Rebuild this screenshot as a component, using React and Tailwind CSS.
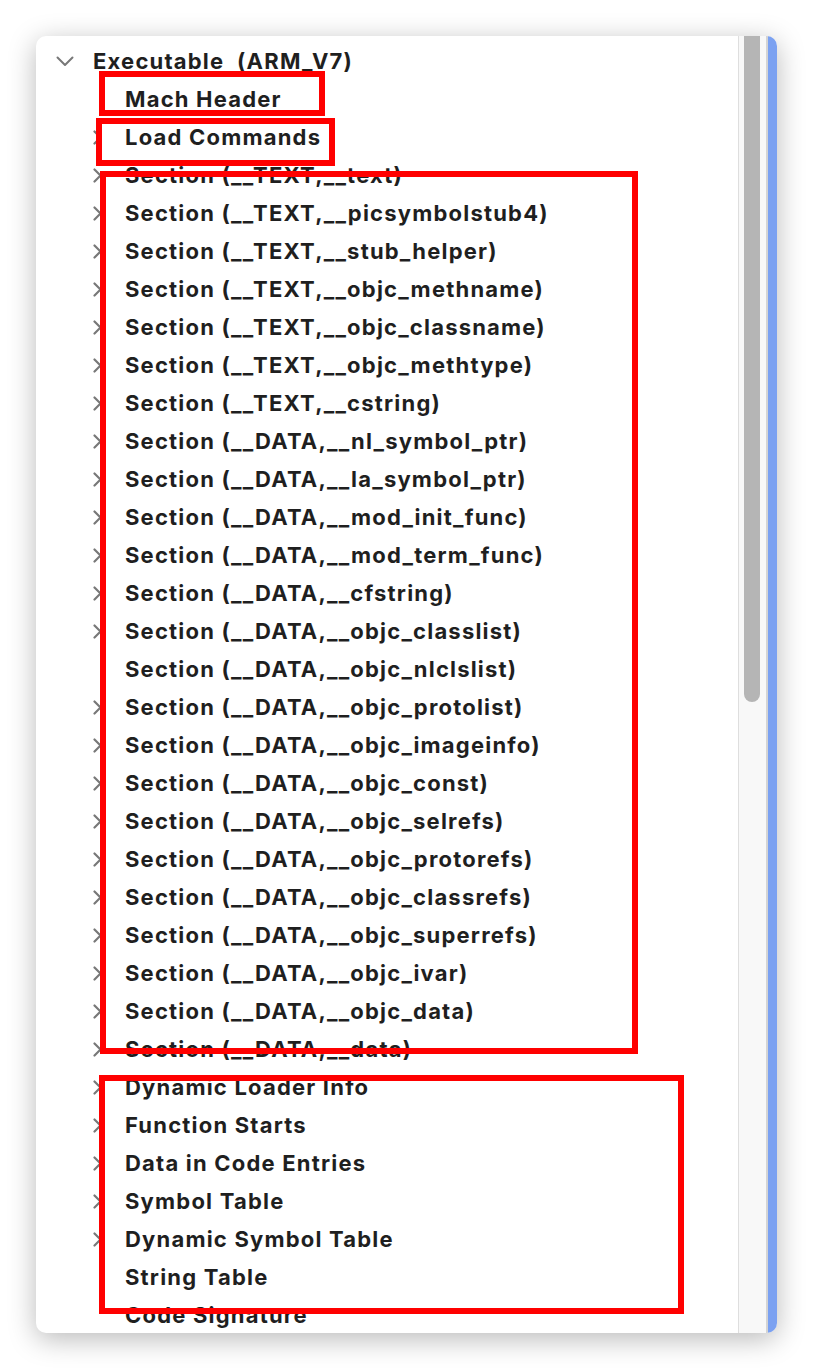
import React from 'react';

const sections = [
  { name: '__TEXT,__text', open: true },
  { name: '__TEXT,__picsymbolstub4', open: true },
  { name: '__TEXT,__stub_helper', open: true },
  { name: '__TEXT,__objc_methname', open: true },
  { name: '__TEXT,__objc_classname', open: true },
  { name: '__TEXT,__objc_methtype', open: true },
  { name: '__TEXT,__cstring', open: true },
  { name: '__DATA,__nl_symbol_ptr', open: true },
  { name: '__DATA,__la_symbol_ptr', open: true },
  { name: '__DATA,__mod_init_func', open: true },
  { name: '__DATA,__mod_term_func', open: true },
  { name: '__DATA,__cfstring', open: true },
  { name: '__DATA,__objc_classlist', open: true },
  { name: '__DATA,__objc_nlclslist', open: false },
  { name: '__DATA,__objc_protolist', open: true },
  { name: '__DATA,__objc_imageinfo', open: true },
  { name: '__DATA,__objc_const', open: true },
  { name: '__DATA,__objc_selrefs', open: true },
  { name: '__DATA,__objc_protorefs', open: true },
  { name: '__DATA,__objc_classrefs', open: true },
  { name: '__DATA,__objc_superrefs', open: true },
  { name: '__DATA,__objc_ivar', open: true },
  { name: '__DATA,__objc_data', open: true },
  { name: '__DATA,__data', open: true },
];

const rows = [
  { label: 'Mach Header', open: false },
  { label: 'Load Commands', open: true },
  ...sections.map((s) => ({ label: `Section (${s.name})`, open: s.open })),
  { label: 'Dynamic Loader Info', open: true },
  { label: 'Function Starts', open: true },
  { label: 'Data in Code Entries', open: true },
  { label: 'Symbol Table', open: true },
  { label: 'Dynamic Symbol Table', open: true },
  { label: 'String Table', open: false },
  { label: 'Code Signature', open: false },
];

const ChevronRight = () => (
  <svg width="11" height="15" viewBox="0 0 11 15" fill="none">
    <path d="M2.5 1.5 L8.5 7.5 L2.5 13.5" stroke="#787878" strokeWidth="2.2" strokeLinecap="round" strokeLinejoin="round" />
  </svg>
);

const ChevronDown = () => (
  <svg width="18" height="11" viewBox="0 0 18 11" fill="none">
    <path d="M1.5 1.5 L9 9 L16.5 1.5" stroke="#787878" strokeWidth="2" strokeLinecap="round" strokeLinejoin="round" />
  </svg>
);

// Annotation boxes drawn over the tree
const marks = [
  'left-[99px] top-[71px] w-[226px] h-[45px]',
  'left-[96px] top-[118px] w-[239px] h-[48px]',
  'left-[100px] top-[171px] w-[538px] h-[883px]',
  'left-[99px] top-[1075px] w-[585px] h-[239px]',
];

export default function App() {
  return (
    <div className="relative w-[814px] h-[1370px] bg-white pl-[36px] pt-[36px]" style={{ fontFamily: 'Inter, "Liberation Sans", sans-serif' }}>
      <div className="w-[741px] h-[1297px] rounded-[10px] overflow-hidden bg-white flex shadow-[0_6px_28px_rgba(0,0,0,0.28)]">
        {/* Tree */}
        <div className="flex-1 pt-[6px] text-[22px] font-bold text-[#1f1f1f] tracking-[1.2px]">
          <div className="flex items-center h-[38px] pl-[20px]">
            <span className="w-[37px] flex"><ChevronDown /></span>
            <span>Executable&nbsp;&nbsp;(ARM_V7)</span>
          </div>
          {rows.map((r) => (
            <div key={r.label} className="flex items-center h-[38px] pl-[56px] whitespace-nowrap">
              <span className="w-[33px] flex">{r.open && <ChevronRight />}</span>
              <span>{r.label}</span>
            </div>
          ))}
        </div>

        {/* Scroll bar */}
        <div className="w-[28px] border-l border-[#dedede] bg-[#f8f8f8] flex justify-center pr-[2px]">
          <div className="w-[16px] h-[666px] bg-[#b5b5b5] rounded-b-full" />
        </div>
        <div className="w-[2px] bg-[#d4d4d4]" />
        <div className="w-[9px] bg-[#7ba1f1]" />
      </div>

      {marks.map((m) => (
        <div key={m} className={`absolute border-[6px] border-[#ff0000] ${m}`} />
      ))}
    </div>
  );
}
